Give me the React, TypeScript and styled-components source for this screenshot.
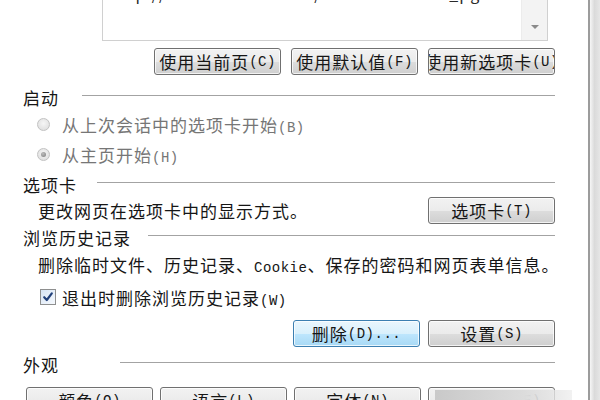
import styled, { createGlobalStyle, css } from "styled-components";

const GlobalStyle = createGlobalStyle`
  html, body {
    margin: 0;
    padding: 0;
    background: #ffffff;
    overflow: hidden;
  }
  body {
    font-family: "Noto Sans CJK SC", "Noto Sans", sans-serif;
    color: #161616;
  }
`;

const dialogText = css`
  font-size: 17px;
  letter-spacing: 1px;
  white-space: nowrap;
`;

const Page = styled.div`
  position: relative;
  width: 600px;
  height: 400px;
  overflow: hidden;
  display: flex;
`;

const Dialog = styled.div`
  box-sizing: border-box;
  flex: 0 0 590px;
  min-width: 0;
  overflow: hidden;
  display: flex;
  flex-direction: column;
  padding: 0 33px 0 23px;
  border-right: 2px solid #9c9c9c;
  background: #ffffff;

  & > * {
    flex-shrink: 0;
  }
`;

const WindowEdge = styled.div`
  flex: 1;
  background: linear-gradient(to right, #f6f6f6, #dadada 45%, #e6e6e6);
`;

const ListBox = styled.div`
  box-sizing: border-box;
  margin: -30px 7px 0 79px;
  height: 71px;
  display: flex;
  border: 1px solid #d0d0d0;
  background: #ffffff;
`;

const ListText = styled.div`
  flex: 1;
  min-width: 0;
  padding: 12px 0 0 8px;
  font-size: 16px;
  line-height: 20px;
  letter-spacing: 1px;
  color: #2a2a2a;
  white-space: nowrap;
  overflow: hidden;
`;

const ScrollTrack = styled.div`
  width: 25px;
  display: flex;
  flex-direction: column;
  justify-content: flex-end;
  align-items: center;
  background: #f3f3f3;
  border-left: 1px solid #ececec;
`;

const ScrollArrow = styled.span`
  width: 0;
  height: 0;
  margin-bottom: 11px;
  border-left: 4px solid transparent;
  border-right: 4px solid transparent;
  border-top: 4px solid #8a8a8a;
`;

const Row = styled.div<{ $mt: number; $h?: number; $pl?: number; $justify?: string; $gap?: number }>`
  display: flex;
  align-items: center;
  margin-top: ${(p) => p.$mt}px;
  height: ${(p) => p.$h ?? 20}px;
  padding-left: ${(p) => p.$pl ?? 0}px;
  justify-content: ${(p) => p.$justify ?? "flex-start"};
  gap: ${(p) => p.$gap ?? 0}px;
`;

const Button = styled.button<{ $focused?: boolean }>`
  box-sizing: border-box;
  width: 127px;
  height: 27px;
  flex-shrink: 0;
  padding: 0;
  display: flex;
  align-items: center;
  justify-content: center;
  overflow: hidden;
  border: 1px solid ${(p) => (p.$focused ? "#3c7fb1" : "#707070")};
  border-radius: 3px;
  background: ${(p) =>
    p.$focused
      ? "linear-gradient(#eaf6fd 0%, #d9f0fc 50%, #bee6fd 51%, #a7d9f5 100%)"
      : "linear-gradient(#f2f2f2 0%, #ebebeb 50%, #dddddd 51%, #cfcfcf 100%)"};
  box-shadow: inset 0 0 0 1px rgba(255, 255, 255, 0.75);
  font-family: inherit;
  color: #161616;
  ${dialogText}
`;

const Key = styled.span`
  font-family: "Liberation Mono", "DejaVu Sans Mono", monospace;
  font-size: 14px;
  letter-spacing: 0.5px;
`;

const Header = styled.div<{ $mt: number }>`
  display: flex;
  align-items: center;
  height: 20px;
  margin-top: ${(p) => p.$mt}px;
`;

const HeaderLabel = styled.span<{ $w: number }>`
  width: ${(p) => p.$w}px;
  flex-shrink: 0;
  ${dialogText}
`;

const Rule = styled.div`
  flex: 1;
  height: 1px;
  margin-bottom: 3px;
  background: #a3a3a3;
`;

const Label = styled.span<{ $muted?: boolean }>`
  ${dialogText}
  color: ${(p) => (p.$muted ? "#767676" : "#161616")};
`;

const Radio = styled.span<{ $checked?: boolean }>`
  position: relative;
  box-sizing: border-box;
  width: 13px;
  height: 13px;
  margin-right: 12px;
  flex-shrink: 0;
  border-radius: 50%;
  border: 1px solid #c2c2c2;
  background: radial-gradient(circle at 50% 40%, #f6f6f6, #dadada);

  &::after {
    content: "";
    display: ${(p) => (p.$checked ? "block" : "none")};
    position: absolute;
    left: 3px;
    top: 3px;
    width: 5px;
    height: 5px;
    border-radius: 50%;
    background: radial-gradient(circle at 40% 35%, #bdbdbd, #7d7d7d);
  }
`;

const CheckBox = styled.span`
  box-sizing: border-box;
  width: 16px;
  height: 16px;
  margin: 0 6px 0 1px;
  flex-shrink: 0;
  display: flex;
  align-items: center;
  justify-content: center;
  border: 1px solid #8e8f8f;
  background: linear-gradient(135deg, #d6e4f4, #f6f9fd);
`;

const Watermark = styled.div`
  position: absolute;
  left: 435px;
  top: 390px;
  width: 137px;
  height: 10px;
  background: linear-gradient(to right, #c9c9c9, #dcdcdc 65%, rgba(236, 236, 236, 0.7));
`;

export default function App() {
  return (
    <>
      <GlobalStyle />
      <Page>
        <Dialog>
          <ListBox>
            <ListText>http://www.hao123.com/?tn=sitehao123_pg</ListText>
            <ScrollTrack>
              <ScrollArrow />
            </ScrollTrack>
          </ListBox>

          <Row $mt={7} $h={27} $justify="flex-end" $gap={10}>
            <Button>
              使用当前页<Key>(C)</Key>
            </Button>
            <Button>
              使用默认值<Key>(F)</Key>
            </Button>
            <Button>
              使用新选项卡<Key>(U)</Key>
            </Button>
          </Row>

          <Header $mt={12}>
            <HeaderLabel $w={59}>启动</HeaderLabel>
            <Rule />
          </Header>
          <Row $mt={7} $pl={14}>
            <Radio />
            <Label $muted>
              从上次会话中的选项卡开始<Key>(B)</Key>
            </Label>
          </Row>
          <Row $mt={10} $pl={14}>
            <Radio $checked />
            <Label $muted>
              从主页开始<Key>(H)</Key>
            </Label>
          </Row>

          <Header $mt={10}>
            <HeaderLabel $w={74}>选项卡</HeaderLabel>
            <Rule />
          </Header>
          <Row $mt={3} $h={27} $pl={15} $justify="space-between">
            <Label>更改网页在选项卡中的显示方式。</Label>
            <Button>
              选项卡<Key>(T)</Key>
            </Button>
          </Row>

          <Header $mt={3}>
            <HeaderLabel $w={125}>浏览历史记录</HeaderLabel>
            <Rule />
          </Header>
          <Row $mt={7} $pl={15}>
            <Label>
              删除临时文件、历史记录、<Key>Cookie</Key>、保存的密码和网页表单信息。
            </Label>
          </Row>
          <Row $mt={13} $pl={16}>
            <CheckBox>
              <svg width="12" height="12" viewBox="0 0 12 12">
                <path
                  d="M2.2 6.2 L4.8 9 L9.8 2.4"
                  fill="none"
                  stroke="#21407a"
                  strokeWidth="2.2"
                  strokeLinecap="round"
                  strokeLinejoin="round"
                />
              </svg>
            </CheckBox>
            <Label>
              退出时删除浏览历史记录<Key>(W)</Key>
            </Label>
          </Row>
          <Row $mt={13} $h={27} $justify="flex-end" $gap={8}>
            <Button $focused>
              删除<Key>(D)...</Key>
            </Button>
            <Button>
              设置<Key>(S)</Key>
            </Button>
          </Row>

          <Header $mt={7}>
            <HeaderLabel $w={97}>外观</HeaderLabel>
            <Rule />
          </Header>
          <Row $mt={13} $h={27} $pl={3} $justify="space-between">
            <Button>
              颜色<Key>(O)</Key>
            </Button>
            <Button>
              语言<Key>(L)</Key>
            </Button>
            <Button>
              字体<Key>(N)</Key>
            </Button>
            <Button>
              辅助功能<Key>(E)</Key>
            </Button>
          </Row>
        </Dialog>
        <WindowEdge />
        <Watermark />
      </Page>
    </>
  );
}
